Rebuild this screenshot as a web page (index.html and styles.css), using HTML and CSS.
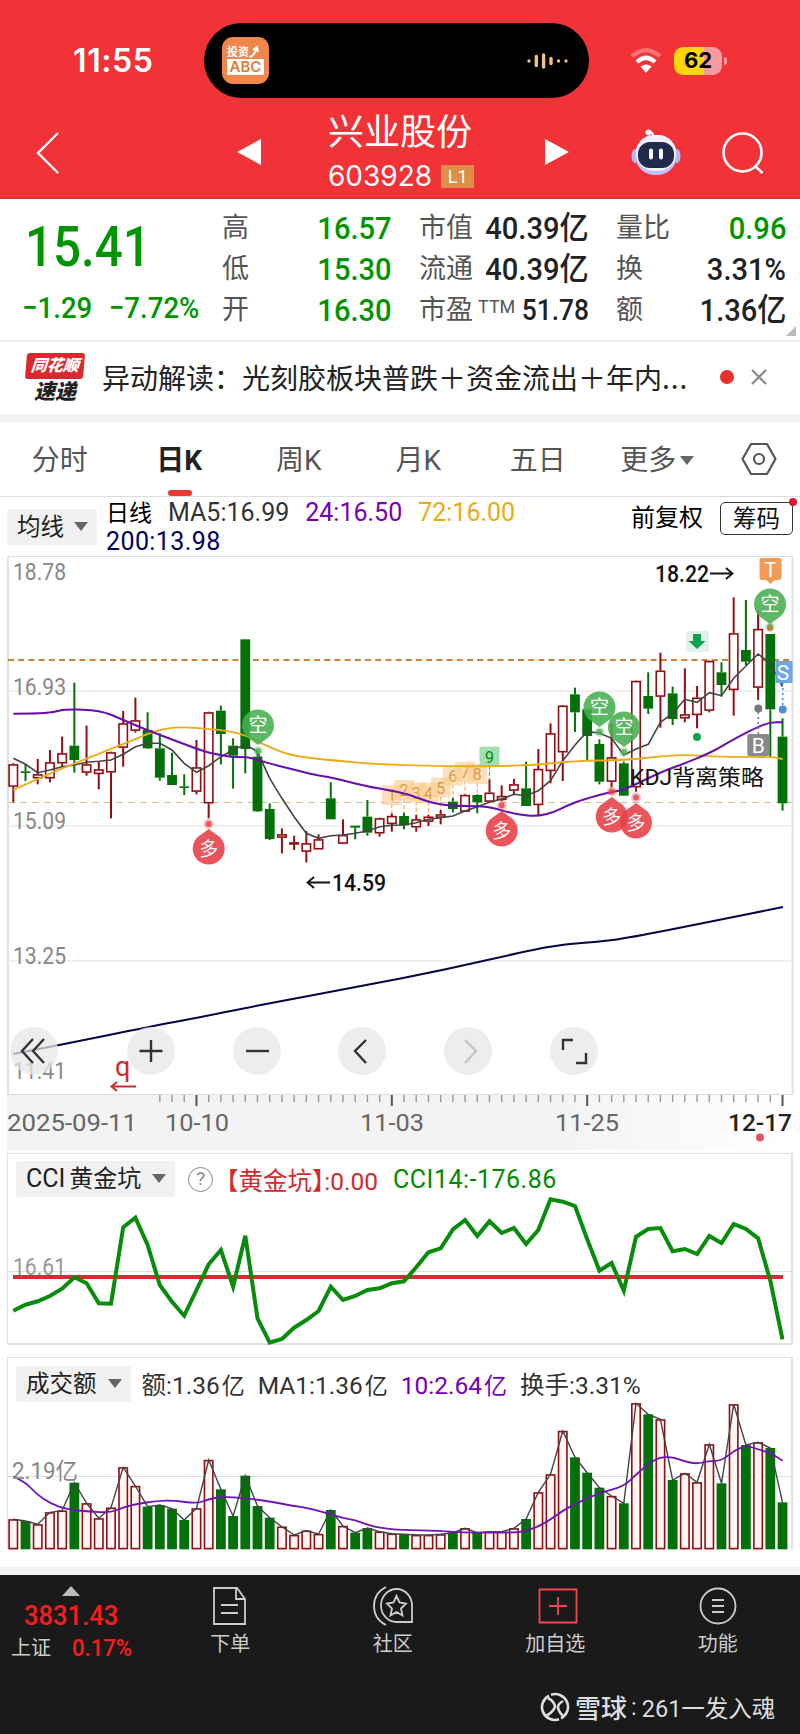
FILE: index.html
```html
<!DOCTYPE html>
<html lang="zh-CN">
<head>
    <meta charset="UTF-8">
    <meta name="viewport" content="width=device-width, initial-scale=1.0">
    <title>兴业股份 603928</title>
    <link rel="stylesheet" href="styles.css">
</head>
<body>
    <header class="header">
        <div class="status-bar">
            <span class="time">11:55</span>
            <div class="island">
                <div class="podcast">
                    <span class="podcast-top">投资<svg width="10" height="12" viewBox="0 0 10 12"><path d="M1 11q5-2 6-8M4 4l4-3 1 5" fill="none" stroke="#fff" stroke-width="2"/></svg></span>
                    <span class="podcast-abc">ABC</span>
                </div>
                <svg class="wave" width="42" height="16" viewBox="0 0 42 16" stroke="#efc08e" stroke-width="3.4" stroke-linecap="round">
                    <path d="M2 8v.1M9.300 3.500v9M16.600 2v12M24 5.500v5M31.500 8v.1M39 8v.1"/>
                </svg>
            </div>
            <svg class="wifi" width="32" height="26" viewBox="0 0 32 26" fill="none" stroke="#fff" stroke-width="4.200">
                <path d="M2 8.500Q16-4 30 8.500" opacity=".3"/>
                <path d="M7 14Q16 5.500 25 14"/>
                <path d="M16 25l-5.500-6.500q5.500-4 11 0z" fill="#fff" stroke="none"/>
            </svg>
            <div class="battery">62</div>
        </div>
        <nav class="title-bar">
            <svg class="back" width="24" height="42" viewBox="0 0 24 42"><path d="M22 1L2 21l20 20" fill="none" stroke="#fff" stroke-width="2.400"/></svg>
            <svg class="prev" width="24" height="26" viewBox="0 0 24 26"><path d="M0 13L24 0v26z" fill="#fff"/></svg>
            <div class="stock">
                <h1>兴业股份</h1>
                <div class="code">603928 <span class="level">L1</span></div>
            </div>
            <svg class="next" width="24" height="26" viewBox="0 0 24 26"><path d="M24 13L0 0v26z" fill="#fff"/></svg>
            <svg class="robot" width="50" height="48" viewBox="0 0 50 48">
                <path d="M22 8q1-4-3-5" fill="none" stroke="#fff" stroke-width="2"/>
                <circle cx="17.500" cy="3.500" r="3" fill="#f3f0ff"/>
                <ellipse cx="4" cy="27" rx="3.500" ry="7" fill="#b9b5f5"/>
                <ellipse cx="46" cy="27" rx="3.500" ry="7" fill="#b9b5f5"/>
                <rect x="4" y="6" width="42" height="40" rx="20" fill="#c4c0fa"/>
                <rect x="5" y="6" width="40" height="36" rx="18" fill="#f1efff"/>
                <rect x="7" y="13" width="36" height="26" rx="12" fill="#1f2a4d"/>
                <path d="M20 21.500v7M30 21.500v7" stroke="#fff" stroke-width="4" stroke-linecap="round"/>
            </svg>
            <svg class="search" width="42" height="42" viewBox="0 0 42 42" fill="none" stroke="#fff" stroke-width="2.600"><circle cx="20.500" cy="20.500" r="19"/><path d="M33 34l7.500 7"/></svg>
        </nav>
    </header>

    <section class="quote">
        <div class="price">
            <strong>15.41</strong>
            <div class="change"><span>−1.29</span><span>−7.72%</span></div>
        </div>
        <dl class="stats">
            <dt>高</dt><dd class="down">16.57</dd>
            <dt>低</dt><dd class="down">15.30</dd>
            <dt>开</dt><dd class="down">16.30</dd>
        </dl>
        <dl class="stats">
            <dt>市值</dt><dd>40.39<i>亿</i></dd>
            <dt>流通</dt><dd>40.39<i>亿</i></dd>
            <dt>市盈<sup>TTM</sup></dt><dd class="small">51.78</dd>
        </dl>
        <dl class="stats">
            <dt>量比</dt><dd class="down">0.96</dd>
            <dt>换</dt><dd>3.31%</dd>
            <dt>额</dt><dd>1.36<i>亿</i></dd>
        </dl>
    </section>

    <section class="news">
        <div class="news-logo"><span class="logo-top">同花顺</span><span class="logo-bottom">速递</span></div>
        <p>异动解读：光刻胶板块普跌＋资金流出＋年内<span class="dots">...</span></p>
        <span class="dot"></span>
        <svg width="16" height="16" viewBox="0 0 16 16"><path d="M1 1l14 14M15 1L1 15" stroke="#888" stroke-width="2"/></svg>
    </section>

    <nav class="tabs">
        <span>分时</span>
        <span class="active">日K</span>
        <span>周K</span>
        <span>月K</span>
        <span>五日</span>
        <span>更多<b class="caret"></b></span>
        <svg width="36" height="34" viewBox="0 0 36 34" fill="none" stroke="#555" stroke-width="2.200"><path d="M10 2h16l8.500 15L26 32H10L1.500 17z" stroke-linejoin="round"/><circle cx="18" cy="17" r="5"/></svg>
    </nav>

    <section class="ma-bar">
        <button class="select">均线<b class="caret"></b></button>
        <div class="ma-values">
            <span class="period">日线</span><span class="ma5">MA5:16.99</span><span class="ma24">24:16.50</span><span class="ma72">72:16.00</span>
            <div class="ma200">200:13.98</div>
        </div>
        <span class="adjust">前复权</span>
        <button class="chips">筹码</button>
    </section>

    <section class="price-chart">
        <svg id="price" width="800" height="594" viewBox="0 556 800 594"></svg>
        <div class="tools">
            <button><svg viewBox="0 0 48 48"><path d="M23 12L12 24l11 12M34 12L23 24l11 12"/></svg></button>
            <button><svg viewBox="0 0 48 48"><path d="M24 13v22M12.500 24h23" stroke-width="2.600"/></svg></button>
            <button><svg viewBox="0 0 48 48"><path d="M13 24h23" stroke-width="2.800"/></svg></button>
            <button><svg viewBox="0 0 48 48"><path d="M28 13L17 24l11 12"/></svg></button>
            <button class="off"><svg viewBox="0 0 48 48"><path d="M21 13l11 11-11 12"/></svg></button>
            <button><svg viewBox="0 0 48 48"><path d="M13 23V13h10M36 26v10H26"/></svg></button>
        </div>
    </section>

    <section class="panel cci-panel">
        <div class="panel-head">
            <button class="select"><i>CCI</i>黄金坑<b class="caret"></b></button>
            <span class="help">?</span>
            <span class="gold">【黄金坑】:0.00</span>
            <span class="cci">CCI14:-176.86</span>
        </div>
        <svg id="cci" width="784" height="142" viewBox="8 1202 784 142"></svg>
    </section>

    <section class="panel volume">
        <div class="panel-head">
            <button class="select">成交额<b class="caret"></b></button>
            <span>额:1.36<i>亿</i></span>
            <span>MA1:1.36<i>亿</i></span>
            <span class="ma24">10:2.64<i>亿</i></span>
            <span>换手:3.31%</span>
        </div>
        <svg id="volume" width="784" height="143" viewBox="8 1407 784 143"></svg>
    </section>

    <footer class="footer">
        <div class="index">
            <b class="up-arrow"></b>
            <strong>3831.43</strong>
            <div><span>上证</span><em>0.17%</em></div>
        </div>
        <div class="action">
            <svg width="40" height="40" viewBox="0 0 40 40"><path d="M4 2h23l8 11v25H4zM26 2v11h9M11 19h17M11 27h17"/></svg>
            下单
        </div>
        <div class="action">
            <svg width="42" height="40" viewBox="0 0 42 40"><path d="M14 1Q2 7 2 20t12 19M40 36H25A15.500 16.500 0 1 1 40 20zM24.500 10l3 6.500 6.500 1-5 5 1.500 7-6-3.500-6 3.500 1.500-7-5-5 6.500-1z"/></svg>
            社区
        </div>
        <div class="action">
            <svg class="add" width="40" height="40" viewBox="0 0 40 40"><path d="M1.500 3.500h37v33h-37zM20 11v18M11 20h18"/></svg>
            加自选
        </div>
        <div class="action">
            <svg width="40" height="40" viewBox="0 0 40 40"><circle cx="20" cy="20" r="17.500"/><path d="M14 14h12M14 20h12M14 26h12"/></svg>
            功能
        </div>
        <div class="watermark">
            <svg width="30" height="30" viewBox="0 0 30 30" fill="none" stroke="#ddd" stroke-width="2.600"><path d="M11 2.800A12.800 12.800 0 0 1 21 26.300M19 27.200A12.800 12.800 0 0 1 9 3.700"/><path d="M8 6q7 4 7 9-2 5-9 9M23 9q-5 3-5 6 0 4 5 9"/></svg>
            <b>雪球</b><span class="colon">:</span><span>261一发入魂</span>
        </div>
    </footer>
    <script src="script.js"></script>
</body>
</html>
```

FILE: styles.css
```css
* {
    box-sizing: border-box;
}

body {
    margin: 0;
    width: 800px;
    height: 1734px;
    overflow: hidden;
    background: #fff;
    color: #333;
    font-family: Roboto, "Noto Sans CJK SC", sans-serif;
}

button {
    font-family: inherit;
    border: none;
    padding: 0;
}

i, em {
    font-style: normal;
}

svg {
    display: block;
    flex: none;
}

h1, p, dl, dd {
    margin: 0;
}

/* header */
.header {
    height: 199px;
    background: #f13237;
    color: #fff;
    border-bottom: 1px solid #c93a3c;
}

.status-bar {
    display: flex;
    align-items: center;
    padding: 23px 0 0 73px;
    height: 98px;
}

.time {
    width: 131px;
    font: 600 32px Inter, sans-serif;
    letter-spacing: 0.6px;
}

.island {
    display: flex;
    align-items: center;
    justify-content: space-between;
    width: 385px;
    height: 75px;
    padding: 0 20px 0 18px;
    border-radius: 38px;
    background: #000;
}

.podcast {
    width: 47px;
    height: 47px;
    padding: 9px 5px 0;
    border-radius: 11px;
    background: #f0864a;
}

.podcast-top {
    display: flex;
    font-size: 11px;
    line-height: 13px;
    font-weight: bold;
}

.podcast-abc {
    display: block;
    height: 16px;
    background: #fff;
    color: #e07b3c;
    font: 600 15px/16px Inter, sans-serif;
    text-align: center;
}

.wifi {
    margin-left: 41px;
}

.battery {
    position: relative;
    width: 48px;
    height: 28px;
    margin-left: 12px;
    border-radius: 9px;
    background: linear-gradient(90deg, #ffd60a 63%, #f89ba0 63%);
    color: #000;
    font: 700 22px/27px Inter, sans-serif;
    text-align: center;
}

.battery::after {
    content: "";
    position: absolute;
    right: -5px;
    top: 10px;
    width: 3px;
    height: 8px;
    border-radius: 0 4px 4px 0;
    background: #f89ba0;
}

.title-bar {
    display: flex;
    padding-left: 36px;
}

.back {
    margin-top: 34px;
}

.prev {
    margin: 41px 0 0 177px;
}

.stock {
    width: 150px;
    margin-left: 67px;
}

.stock h1 {
    font-size: 36px;
    line-height: 40px;
    font-weight: 400;
    padding-top: 15px;
    white-space: nowrap;
}

.code {
    display: flex;
    align-items: center;
    margin-top: 5px;
    font: 400 28px/36px Inter, sans-serif;
    white-space: nowrap;
}

.level {
    width: 33px;
    height: 23px;
    margin-left: 9px;
    background: #dd8f47;
    font: 18px/23px Roboto, sans-serif;
    text-align: center;
}

.next {
    margin: 41px 0 0 67px;
}

.robot {
    margin: 31px 0 0 62px;
}

.search {
    margin: 34px 0 0 41px;
}

/* quote */
.quote {
    position: relative;
    display: flex;
    height: 143px;
    border-bottom: 2px solid #ededed;
}

.quote::after {
    content: "";
    position: absolute;
    right: 4px;
    bottom: 4px;
    border: 5px solid #bbb;
    border-top-color: transparent;
    border-left-color: transparent;
}

.price {
    flex: none;
    width: 222px;
    padding: 17px 0 0 22px;
    color: #009500;
}

.price strong {
    display: block;
    margin-left: 3px;
    font-size: 56px;
    line-height: 62px;
    font-weight: 500;
    transform: scaleX(0.88);
    transform-origin: 0 0;
}

.change {
    display: flex;
    gap: 18px;
    margin-top: 13px;
    font-size: 30px;
    line-height: 34px;
    white-space: nowrap;
    transform: scaleX(0.92);
    transform-origin: 0 0;
    font-weight: 500;
}

.stats {
    flex: none;
    display: grid;
    grid-template-columns: auto 1fr;
    grid-auto-rows: 41px;
    align-items: center;
    height: 123px;
    width: 170px;
    margin: 9px 27px 0 0;
    line-height: 41px;
    white-space: nowrap;
}

.stats:last-child {
    margin-right: 0;
}

.stats dt {
    font-size: 27px;
    color: #555;
}

.stats dd {
    justify-self: end;
    margin-left: -50px;
    color: #222;
    font-size: 32px;
    font-weight: 500;
    transform: scaleX(0.91);
    transform-origin: 100% 0;
}

.stats dd i {
    font-size: 32px;
}

.stats .small {
    font-size: 29px;
}

.stats .down {
    color: #009500;
}

sup {
    position: relative;
    top: -1px;
    margin-left: 5px;
    font: 18px/1 Roboto, sans-serif;
    vertical-align: 5px;
}

/* news */
.news {
    display: flex;
    align-items: center;
    height: 80px;
    padding: 0 0 8px 26px;
    border-bottom: 8px solid #f3f3f3;
}

.news-logo {
    width: 58px;
    margin-top: 9px;
    text-align: center;
    font-style: italic;
    font-weight: 900;
}

.logo-top {
    display: block;
    height: 26px;
    border-radius: 3px;
    background: #d9292f;
    color: #fff;
    font-size: 16px;
    line-height: 25px;
    transform: skewX(-5deg);
}

.logo-bottom {
    display: block;
    color: #222;
    font-size: 21px;
    line-height: 26px;
}

.news p {
    width: 619px;
    padding: 6px 0 0 18px;
    color: #222;
    font-size: 28px;
    line-height: 40px;
    white-space: nowrap;
    font-family: "Noto Sans CJK SC", sans-serif;
}

.dots {
    letter-spacing: 1px;
}

.dot {
    width: 14px;
    height: 14px;
    margin: 6px 25px 0 17px;
    border-radius: 50%;
    background: #e5302c;
}

.news svg {
    margin: 6px 0 0 -8px;
}

/* period tabs */
.tabs {
    display: flex;
    height: 75px;
    align-items: center;
    color: #555;
    border-bottom: 1px solid #ddd;
}

.tabs span {
    position: relative;
    flex: none;
    width: 119.500px;
    height: 74px;
    font-size: 28px;
    line-height: 77px;
    text-align: center;
}

.tabs svg {
    margin-left: 24px;
}

.tabs .active {
    color: #222;
    font-weight: bold;
}

.tabs .active::after {
    content: "";
    position: absolute;
    left: 48px;
    bottom: 0;
    width: 24px;
    height: 6px;
    border-radius: 3px;
    background: #e93a36;
}

.caret {
    display: inline-block;
    border: 7px solid transparent;
    border-top: 9px solid #666;
    border-bottom: 0;
    vertical-align: 5px;
}

.tabs .caret {
    margin: 0 0 0 4px;
}

/* moving averages */
.ma-bar {
    display: flex;
    height: 59px;
    padding-left: 7px;
}

.select {
    height: 36px;
    padding: 0 9px 0 10px;
    border-radius: 3px;
    background: #f1f1f1;
    color: #222;
    font-size: 23.500px;
    line-height: 34px;
    white-space: nowrap;
}

.select .caret {
    margin-left: 11px;
    vertical-align: 4px;
}

.ma-bar .select {
    flex: none;
    width: 90px;
    margin-top: 12px;
}

.ma-bar .select .caret {
    margin-left: 10px;
}

.ma-values {
    flex: none;
    width: 534px;
    padding: 1px 0 0 9px;
    font-size: 25px;
    line-height: 30px;
    white-space: nowrap;
}

.ma-values span {
    margin-right: 16px;
}

.ma-values .period {
    color: #000;
    font-size: 23px;
}

.ma200 {
    color: #000060;
    line-height: 26px;
    letter-spacing: 0.4px;
}

.ma24 {
    color: #7600b8;
}

.ma72 {
    color: #e8ac13;
}

.adjust {
    flex: none;
    width: 89px;
    color: #000;
    font-size: 24px;
    line-height: 43px;
}

.chips {
    position: relative;
    flex: none;
    width: 73px;
    height: 33px;
    margin-top: 5px;
    border: 1px solid #333;
    border-radius: 5px;
    background: #fff;
    color: #111;
    font-size: 23.500px;
    line-height: 30px;
}

.chips::after {
    content: "";
    position: absolute;
    right: -5px;
    top: -5px;
    width: 8px;
    height: 8px;
    border-radius: 50%;
    background: #e0142c;
}

/* charts */
.price-chart {
    position: relative;
    height: 597px;
}

.tools {
    position: absolute;
    left: 10px;
    top: 471px;
    display: flex;
    gap: 57.800px;
}

.tools button {
    width: 48px;
    height: 48px;
    border-radius: 50%;
    background: rgba(231, 231, 231, 0.75);
}

.tools button:first-child {
    margin-right: 11px;
}

.tools path {
    fill: none;
    stroke: #333;
    stroke-width: 2.400;
}

.tools .off path {
    stroke: #c4c4c4;
}

.panel {
    height: 192px;
    margin: 0 7px 12px;
    border: 1px solid #e2e2e2;
    border-width: 1px 2px 2px 1px;
}

.panel > svg {
    overflow: visible;
}

.panel-head {
    display: flex;
    align-items: center;
    height: 48px;
    padding: 2px 0 0 8px;
    font-size: 25px;
    white-space: nowrap;
}

.cci-panel .select {
    font-size: 24px;
}

.cci-panel .select i {
    margin-right: 4px;
    font-size: 25px;
}

.help {
    width: 25px;
    height: 25px;
    margin: 0 13px 0 13px;
    border: 1.500px solid #888;
    border-radius: 50%;
    color: #888;
    font-size: 19px;
    line-height: 22px;
    text-align: center;
}

.gold {
    margin-right: 15px;
    color: #d12a31;
    font-size: 24.500px;
    font-feature-settings: "halt";
}

.cci {
    color: #008a00;
    letter-spacing: 0.5px;
}

.volume {
    height: 193px;
    margin-bottom: 17px;
    border-bottom: none;
}

.volume .panel-head {
    height: 49px;
}

.volume .select {
    margin-right: 11px;
}

.volume .panel-head > span {
    margin-right: 13px;
    font-size: 24.500px;
}

.volume .panel-head i {
    margin-left: 2px;
    font-size: 23px;
}

/* footer */
.footer {
    display: grid;
    grid-template-columns: 149px repeat(4, 162.500px);
    grid-template-rows: 100px 67px;
    height: 167px;
    border-top: 8px solid #f3f3f3;
    background: #1a1a1a;
    color: #ccc;
}

.index {
    padding: 11px 0 0 11px;
    color: #ff1a1a;
    white-space: nowrap;
}

.up-arrow {
    display: block;
    width: 0;
    margin-left: 51px;
    border: 9px solid transparent;
    border-top: 0;
    border-bottom: 10px solid #bbb;
}

.index strong {
    display: block;
    margin: 4px 0 0 13px;
    font-size: 27.500px;
    line-height: 32px;
    font-weight: 500;
    transform: scaleX(0.93);
    transform-origin: 0 0;
}

.index div {
    display: flex;
    gap: 21px;
    font-size: 20px;
    line-height: 32px;
}

.index div span {
    color: #ccc;
}

.index em {
    font-size: 24px;
    font-weight: 500;
    transform: scaleX(0.92);
    transform-origin: 0 0;
}

.action {
    display: flex;
    flex-direction: column;
    align-items: center;
    padding-top: 11px;
    font-size: 20px;
    line-height: 37px;
}

.action svg {
    fill: none;
    stroke: #ccc;
    stroke-width: 1.800;
}

.action .add {
    margin-left: 5px;
    stroke: #f0484c;
}

.watermark {
    grid-column: 1 / -1;
    display: flex;
    align-items: center;
    padding: 0 0 4px 540px;
    color: #ddd;
    font-size: 23.500px;
    white-space: nowrap;
}

.watermark b {
    margin-left: 5px;
    font-size: 26px;
    font-weight: 500;
}

.colon {
    margin: 0 5px 0 4px;
}
```

FILE: script.js
```js
// geometry: candles sit on a fixed pitch, y values are in thirds of a pixel
const X0 = 13.3;
const STEP = 12.21;
const RED = "#900d12";
const GREEN = "#04700a";
const cx = i => X0 + i * STEP;

// kind, high, body top, body bottom, low
const candles = [
    ["r", 640, 643, 710, 757], ["g", 643, 664, 667, 693], ["r", 627, 673, 685, 703], ["r", 600, 637, 685, 697],
    ["r", 560, 610, 640, 650], ["g", 398, 587, 630, 668], ["r", 527, 643, 668, 677], ["r", 635, 658, 672, 718],
    ["r", 605, 607, 667, 805], ["r", 483, 520, 593, 650], ["r", 443, 511, 542, 548], ["g", 487, 540, 595, 597],
    ["g", 550, 595, 683, 692], ["g", 608, 675, 705, 705], ["g", 673, 709, 712, 735], ["r", 570, 652, 725, 733],
    ["r", 485, 487, 760, 805], ["g", 467, 482, 552, 643], ["g", 565, 587, 617, 716], ["g", 268, 268, 597, 670],
    ["g", 605, 620, 784, 786], ["g", 760, 777, 867, 870], ["r", 835, 853, 863, 910], ["r", 857, 877, 883, 900],
    ["r", 843, 880, 905, 937], ["r", 853, 868, 898, 898], ["g", 697, 745, 808, 808], ["r", 808, 855, 881, 881],
    ["g", 827, 827, 833, 868], ["g", 750, 800, 848, 857], ["r", 803, 805, 850, 860], ["r", 790, 798, 822, 845],
    ["g", 788, 798, 826, 838], ["r", 795, 808, 832, 845], ["r", 795, 800, 815, 828], ["r", 780, 793, 803, 823],
    ["g", 743, 755, 777, 787], ["r", 733, 735, 785, 785], ["g", 733, 735, 757, 790], ["r", 688, 728, 755, 757],
    ["r", 706, 738, 750, 753], ["r", 687, 703, 722, 732], ["g", 635, 715, 768, 768], ["r", 597, 657, 765, 797],
    ["r", 520, 550, 663, 700], ["r", 465, 467, 607, 693], ["g", 413, 433, 487, 546], ["g", 477, 478, 558, 630],
    ["g", 568, 582, 695, 703], ["r", 520, 622, 695, 712], ["g", 635, 640, 737, 738], ["r", 392, 393, 712, 725],
    ["g", 367, 438, 476, 492], ["r", 308, 362, 440, 533], ["g", 410, 430, 507, 525], ["r", 355, 493, 505, 517],
    ["r", 408, 443, 495, 535], ["r", 332, 333, 482, 487], ["g", 337, 367, 405, 440], ["r", 142, 250, 420, 497],
    ["g", 150, 300, 335, 345], ["r", 185, 237, 413, 450], ["g", 252, 252, 478, 622], ["g", 505, 560, 760, 782]
];

const ma5 = [625, 643, 668, 660, 650, 645, 637, 634, 630, 613, 590, 580, 580, 600, 640, 667, 647, 620, 600, 583, 605, 685,
    745, 800, 850, 865, 857, 855, 850, 843, 830, 826, 825, 818, 808, 803, 798, 783, 770, 757, 747, 733, 737, 722, 692, 632,
    585, 545, 549, 565, 615, 597, 583, 517, 490, 448, 457, 428, 437, 385, 348, 312, 340, 410];
const ma24 = [[40, 491], [120, 491], [160, 486], [195, 478], [300, 480], [370, 510], [440, 540], [520, 570], [600, 600],
    [630, 609], [700, 622], [736, 620], [775, 630], [795, 637], [875, 657], [945, 675], [995, 682], [1095, 708], [1175, 722],
    [1225, 733], [1275, 752], [1315, 763], [1375, 768], [1435, 768], [1475, 772], [1535, 790], [1585, 797], [1615, 798],
    [1660, 788], [1700, 767], [1750, 748], [1835, 725], [1875, 719], [1980, 667], [2060, 638], [2110, 617], [2150, 598],
    [2200, 568], [2270, 532], [2310, 517], [2348, 517]];
const ma72 = [[40, 720], [150, 670], [250, 630], [330, 598], [400, 570], [450, 548], [500, 535], [550, 531], [620, 536],
    [690, 543], [740, 557], [795, 585], [845, 607], [895, 620], [995, 631], [1135, 643], [1295, 648], [1475, 649],
    [1605, 645], [1720, 633], [1880, 630], [1990, 618], [2060, 614], [2170, 621], [2310, 620], [2348, 627]];
const ma200 = [[39, 1512], [180, 1485], [459, 1428], [588, 1404], [765, 1368], [1086, 1308], [1332, 1260], [1593, 1200],
    [1698, 1182], [1791, 1176], [1884, 1164], [2142, 1113], [2349, 1071]];

const cci = [512, 494, 484, 468, 446, 412, 430, 490, 491, 262, 233, 315, 435, 485, 527, 450, 373, 330, 440, 287, 535, 608,
    597, 563, 540, 513, 440, 480, 468, 450, 445, 430, 424, 382, 337, 325, 268, 240, 288, 244, 279, 264, 312, 270, 178, 185,
    198, 298, 392, 369, 452, 290, 267, 264, 334, 327, 342, 288, 309, 252, 267, 295, 422, 598];

const vol = [508, 513, 523, 487, 482, 398, 460, 505, 473, 352, 408, 470, 465, 476, 510, 475, 330, 418, 498, 377, 468, 503,
    530, 555, 542, 552, 480, 528, 548, 534, 545, 551, 553, 555, 555, 553, 548, 535, 548, 545, 545, 535, 507, 427, 373, 243,
    322, 368, 413, 438, 460, 160, 193, 208, 390, 370, 397, 283, 400, 163, 285, 277, 294, 457];
const vol10 = [[40, 380], [75, 395], [110, 433], [150, 460], [200, 478], [270, 485], [330, 488], [370, 472], [410, 462],
    [470, 453], [520, 451], [590, 461], [625, 448], [665, 440], [735, 444], [820, 456], [880, 468], [920, 473], [990, 492],
    [1030, 505], [1065, 510], [1105, 526], [1150, 535], [1200, 540], [1320, 542], [1380, 548], [1540, 548], [1580, 543],
    [1640, 518], [1690, 480], [1740, 455], [1800, 428], [1870, 410], [1910, 372], [1945, 342], [1980, 321], [2020, 322],
    [2050, 333], [2090, 342], [2125, 333], [2165, 332], [2205, 300], [2240, 287], [2275, 298], [2310, 309], [2348, 332]];

function line(x1, y1, x2, y2, color, width = 1, extra = "") {
    return `<line x1="${x1}" y1="${y1}" x2="${x2}" y2="${y2}" stroke="${color}" stroke-width="${width}" ${extra}/>`;
}

function text(x, y, str, length, size, color, extra = "") {
    return `<text x="${x}" y="${y}" textLength="${length}" lengthAdjust="spacingAndGlyphs" font-size="${size}" fill="${color}" ${extra}>${str}</text>`;
}

function poly(values, top, color, width) {
    const pts = values.map((v, i) => `${cx(i).toFixed(1)},${(top + v / 3).toFixed(1)}`).join(" ");
    return `<polyline points="${pts}" fill="none" stroke="${color}" stroke-width="${width}"/>`;
}

// rounds the corners by running through the middle of each segment
function curve(points, top, color, width) {
    const p = points.map(([x, y]) => [x / 3, top + y / 3]);
    let d = `M${p[0]}`;
    for (let i = 1; i < p.length - 1; i++) {
        d += ` Q${p[i]} ${(p[i][0] + p[i + 1][0]) / 2},${(p[i][1] + p[i + 1][1]) / 2}`;
    }
    d += ` L${p[p.length - 1]}`;
    return `<path d="${d}" fill="none" stroke="${color}" stroke-width="${width}"/>`;
}

function pin(x, y, label, dotY) {
    const up = label === "多";
    const color = up ? "#e73e45" : "#47ae50";
    const s = up ? -1 : 1;
    return `<g fill="${color}"><path opacity=".88" d="M${x - 11} ${y + s * 12}A16 16 0 1 ${up ? 0 : 1} ${x + 11} ${y + s * 12}L${x} ${y + s * 20}z"/>
        <circle cx="${x}" cy="${dotY}" r="5" opacity=".3"/><circle cx="${x}" cy="${dotY}" r="3" opacity=".8"/></g>
        <text x="${x}" y="${y + 7}" font-size="19" fill="#fff" text-anchor="middle">${label}</text>`;
}

function tag(x, y, label, color) {
    return `<rect x="${x - 11}" y="${y - 11}" width="22" height="22" rx="2" fill="${color}"/>
        <text x="${x}" y="${y + 7.5}" font-size="21" fill="#fff" text-anchor="middle">${label}</text>`;
}

function drawPrice() {
    let out = `<defs><linearGradient id="fade"><stop offset="0" stop-color="#f3f3f3"/><stop offset=".7" stop-color="#f3f3f3"/><stop offset="1" stop-color="#fff"/></linearGradient></defs>
        <rect x="7" y="1095" width="786" height="56" fill="url(#fade)"/>`;
    out += '<path d="M8 556.5H792.500M8 1094.500H792.500" stroke="#ddd" fill="none"/>';
    out += line(8, 556, 8, 1095, "#e2e2e2", 2) + line(792.5, 556, 792.5, 1095, "#e2e2e2", 2);
    [691, 826, 961].forEach(y => out += line(8, y, 792, y, "#ebebeb", 1.5));
    out += line(8, 660, 792, 660, "#cf813a", 2, 'stroke-dasharray="6 4.200"');
    out += line(8, 802.5, 792, 802.5, "#d6bd96", 1.2, 'stroke-dasharray="7 5"');
    [["18.78", 580], ["16.93", 695], ["15.09", 829], ["13.25", 964], ["11.41", 1079]].forEach(l => out += text(13, l[1], l[0], 53, 23.5, "#888"));

    candles.forEach(([kind, high, top, bottom, low], i) => {
        const x = cx(i);
        const [h, t, b, l] = [high, top, bottom, low].map(v => 550 + v / 3);
        const color = kind === "r" ? RED : GREEN;
        out += line(x, h, x, t, color, 2) + line(x, b, x, l, color, 2);
        if (kind === "r") {
            out += `<rect x="${x - 4.2}" y="${t + 0.6}" width="8.4" height="${Math.max(b - t - 1.2, 1)}" fill="#fff" stroke="${color}" stroke-width="1.6"/>`;
        } else {
            out += `<rect x="${x - 4.9}" y="${t}" width="9.8" height="${Math.max(b - t, 1.6)}" fill="${color}"/>`;
        }
    });

    // nine-count tags
    [[31, 735], [32, 720], [33, 728], [34, 728], [35, 713], [36, 677], [37, 665], [38, 672], [39, 620]].forEach(([i, v], n) => {
        const x = cx(i);
        const y = 550 + v / 3;
        const last = n === 8;
        out += line(x, y + 9, x, 550 + candles[i][1] / 3, last ? "#3fae56" : "#f2b266", 1.2, 'stroke-dasharray="4 2"');
        out += `<rect x="${x - 10}" y="${y - 10}" width="20" height="20" fill="${last ? "#a4dfb1" : "#fbc98e"}" opacity="${last ? 1 : 0.6}"/>
            <text x="${x}" y="${y + 6}" font-size="16" text-anchor="middle" fill="${last ? "#008c00" : "#d99a35"}">${n + 1}</text>`;
    });

    out += poly(ma5, 550, "#444", 1.6);
    out += curve(ma72, 550, "#e9ad1c", 1.9);
    out += curve(ma24, 550, "#6a0dad", 2);
    out += curve(ma200, 550, "#050545", 2);

    out += pin(258, 725, "空", 751) + pin(599.5, 707, "空", 732) + pin(624, 727, "空", 752) + pin(770, 604, "空", 627);
    out += '<circle cx="770" cy="628" r="3" fill="#b98a34"/>';
    out += pin(208.7, 849, "多", 824) + pin(501.7, 831, "多", 805.5) + pin(611.7, 817, "多", 791.5) + pin(636, 823, "多", 797.5);

    out += '<path d="M765 579h11l-5.500 5z" fill="#f49a59"/>' + tag(770.5, 569, "T", "#f49a59");
    out += line(758.3, 712, 758.3, 734, "#777", 1.6, 'stroke-dasharray="2 3"') + '<circle cx="758.300" cy="708.500" r="4" fill="#777"/>' + tag(758.3, 745, "B", "#8a8a8a");
    out += line(782.7, 683, 782.7, 706, "#4b8edb", 1.6, 'stroke-dasharray="2 3"') + '<circle cx="782.700" cy="709.500" r="4" fill="#4b8edb"/>';
    out += '<rect x="775.500" y="661" width="17" height="22" fill="#6fa6e8"/><text x="783" y="680" font-size="21" fill="#fff" text-anchor="middle">S</text>';
    out += '<rect x="686" y="631" width="23" height="21" rx="3" fill="#e2f2ea"/><path d="M693 634h8v7h4.500l-8.500 8-8.500-8h4.500z" fill="#10a24b"/><circle cx="697" cy="737" r="4" fill="#10a24b"/>';

    out += text(630, 785, "KDJ背离策略", 134, 21.5, "#111");
    out += text(655, 582, "18.22", 54, 24.5, "#111", 'font-weight="500"') + text(332, 891, "14.59", 54, 24.5, "#111", 'font-weight="500"');
    out += '<path d="M710 573.500h22M726 568l6.500 5.500-6.500 5.500M330 882.500h-22M314 877l-6.500 5.500 6.500 5.500" fill="none" stroke="#111" stroke-width="1.800"/>';
    out += '<text x="115" y="1076" font-size="27" fill="#d02c2c">q</text><path d="M136 1086.500h-24M117 1082l-5.500 4.500 5.500 4.500" fill="none" stroke="#d02c2c" stroke-width="2"/>';

    for (let i = 12; i < 64; i++) {
        const major = (i - 15) % 16 === 0;
        out += line(cx(i), 1095, cx(i), major ? 1106 : 1102, major ? "#555" : "#999", major ? 2 : 1.4);
    }
    out += text(7, 1131, "2025-09-11", 130, 23.5, "#666") + text(165, 1131, "10-10", 64, 23.5, "#666");
    out += text(360, 1131, "11-03", 64, 23.5, "#666") + text(555, 1131, "11-25", 64, 23.5, "#666");
    out += text(728, 1131, "12-17", 64, 23.5, "#222", 'font-weight="500"') + '<circle cx="760" cy="1137.500" r="4" fill="#e25560"/>';
    document.getElementById("price").innerHTML = out;
}

function drawCci() {
    let out = line(8, 1271.5, 792, 1271.5, "#ddd");
    out += text(13, 1275, "16.61", 53, 23, "#999");
    out += line(13, 1277, 783, 1277, "#cf2e33", 4);
    out += poly(cci, 1140, "#098c0c", 4);
    document.getElementById("cci").innerHTML = out;
}

function drawVolume() {
    let out = line(8, 1476.5, 792, 1476.5, "#ddd");
    vol.forEach((v, i) => {
        const y = 1350 + v / 3;
        const red = candles[i][0] === "r";
        out += red
            ? `<rect x="${cx(i) - 4.2}" y="${y + 0.6}" width="8.4" height="${1548 - y}" fill="#fff6f4" stroke="${RED}" stroke-width="1.6"/>`
            : `<rect x="${cx(i) - 4.9}" y="${y}" width="9.8" height="${1549.3 - y}" fill="${GREEN}"/>`;
    });
    out += poly(vol, 1350, "#444", 1.4) + curve(vol10, 1350, "#7014b4", 1.8);
    out += text(12, 1479, "2.19亿", 66, 23, "#888");
    document.getElementById("volume").innerHTML = out;
}

drawPrice();
drawCci();
drawVolume();
```
